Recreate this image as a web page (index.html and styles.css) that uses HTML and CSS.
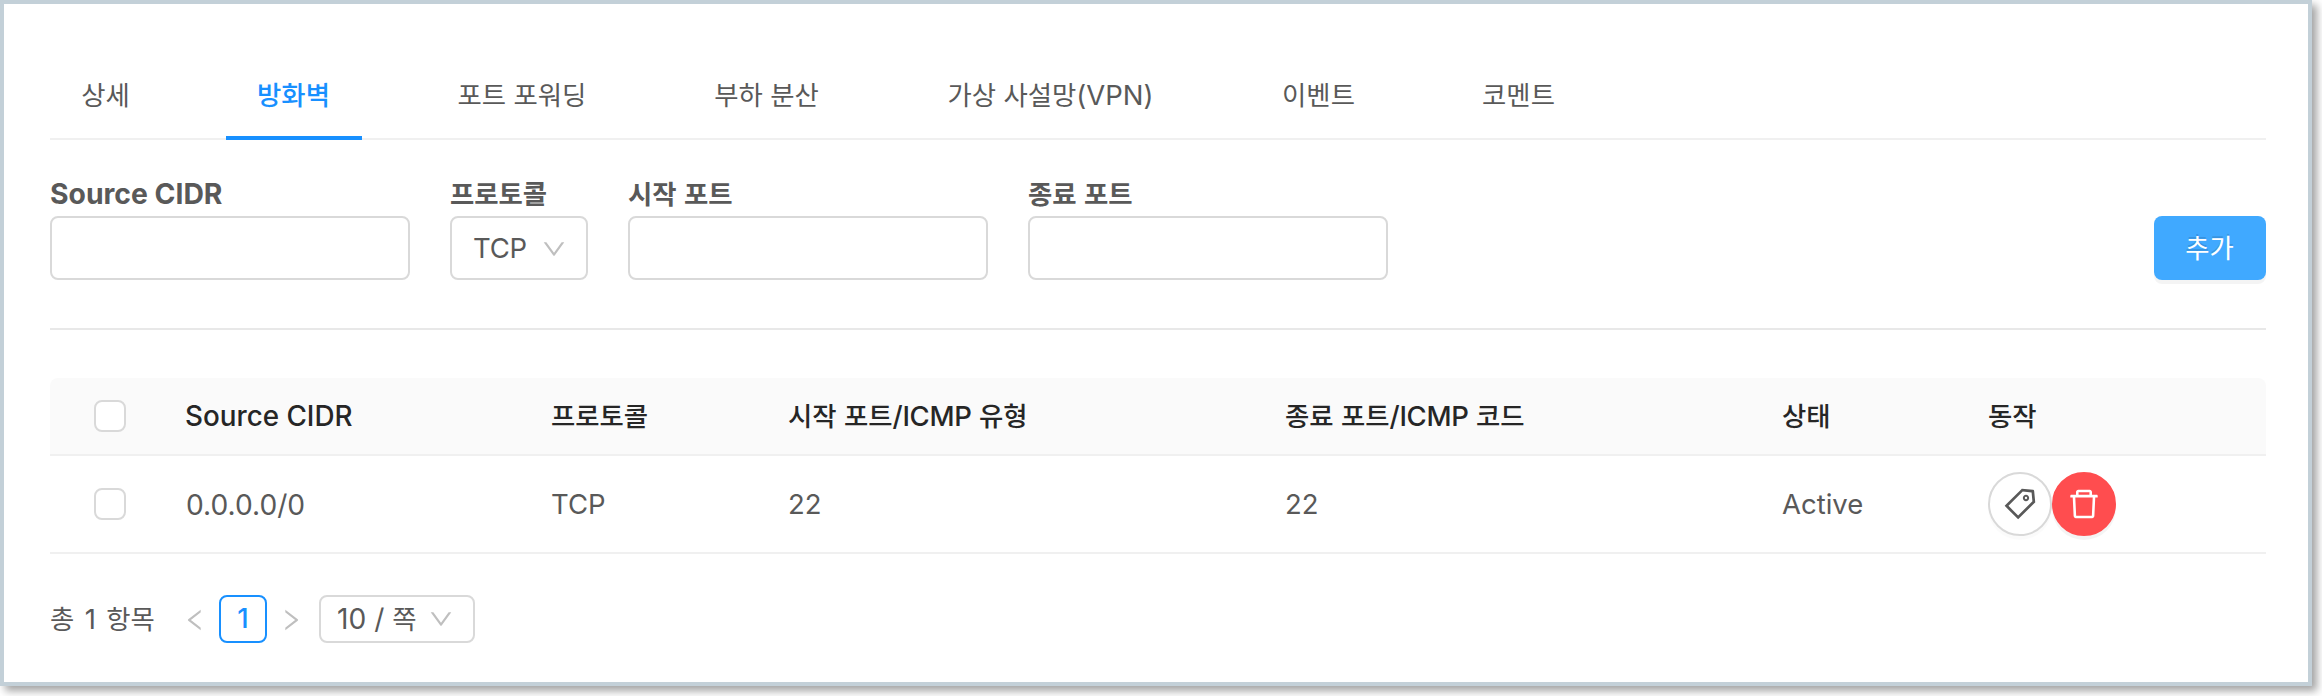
FILE: index.html
```html
<!DOCTYPE html>
<html lang="ko">
<head>
<meta charset="utf-8">
<title>방화벽</title>
<link rel="stylesheet" href="styles.css">
</head>
<body>
<svg class="defs" width="0" height="0">
  <symbol id="down" viewBox="64 64 896 896"><path d="M884 256h-75c-5.1 0-9.9 2.5-12.9 6.6L512 654.2 227.9 262.6c-3-4.1-7.8-6.6-12.9-6.6h-75c-6.5 0-10.3 7.4-6.5 12.7l352.6 486.1c12.8 17.6 39 17.6 51.7 0l352.6-486.1c3.9-5.3.1-12.7-6.4-12.7z"/></symbol>
  <symbol id="left" viewBox="64 64 896 896"><path d="M724 218.3V141c0-6.7-7.7-10.4-12.9-6.3L260.3 486.8a31.86 31.86 0 0 0 0 50.3l450.8 352.1c5.3 4.1 12.9.4 12.9-6.3v-77.3c0-4.9-2.3-9.6-6.1-12.6l-360-281 360-281.1c3.8-3 6.1-7.7 6.1-12.6z"/></symbol>
  <symbol id="tag" viewBox="64 64 896 896"><path d="M938 458.8l-29.6-312.6c-1.5-16.2-14.4-29-30.6-30.6L565.2 86h-.4c-3.2 0-5.7 1-7.6 2.9L88.9 557.2a9.96 9.96 0 0 0 0 14.1l363.8 363.8c1.9 1.9 4.4 2.9 7.1 2.9s5.2-1 7.1-2.9l468.3-468.3c2-2.1 3-5 2.8-8zM459.7 834.7L189.3 564.3 589 164.6 836 188l23.4 247-399.7 399.7zM680 256c-48.5 0-88 39.5-88 88s39.5 88 88 88 88-39.5 88-88-39.5-88-88-88zm0 120c-17.7 0-32-14.3-32-32s14.3-32 32-32 32 14.3 32 32-14.3 32-32 32z"/></symbol>
  <symbol id="delete" viewBox="64 64 896 896"><path d="M360 184h-8c4.4 0 8-3.6 8-8v8h304v-8c0 4.4 3.6 8 8 8h-8v72h72v-80c0-35.3-28.7-64-64-64H352c-35.3 0-64 28.7-64 64v80h72v-72zm504 72H160c-17.7 0-32 14.3-32 32v32c0 4.4 3.6 8 8 8h60.4l24.7 523c1.6 34.1 29.8 61 63.9 61h454c34.2 0 62.3-26.8 63.9-61l24.7-523H888c4.4 0 8-3.6 8-8v-32c0-17.7-14.3-32-32-32zM731.3 840H292.7l-24.2-512h487l-24.2 512z"/></symbol>
</svg>
<main class="panel">
  <nav class="tabs">
    <a class="tab w2">상세</a>
    <a class="tab w3 active">방화벽</a>
    <a class="tab w5">포트 포워딩</a>
    <a class="tab w4">부하 분산</a>
    <a class="tab wvpn">가상 사설망<span class="en">(VPN)</span></a>
    <a class="tab w3">이벤트</a>
    <a class="tab w3">코멘트</a>
  </nav>
  <form class="filters">
    <div class="field wide"><label class="en cidr">Source CIDR</label><input class="box"></div>
    <div class="field proto"><label>프로토콜</label><div class="box select"><span class="en">TCP</span><svg class="arrow"><use href="#down"/></svg></div></div>
    <div class="field wide"><label>시작 포트</label><input class="box"></div>
    <div class="field wide"><label>종료 포트</label><input class="box"></div>
    <button class="add" type="button">추가</button>
  </form>
  <section class="table">
    <div class="row head">
      <span><i class="check"></i></span>
      <span class="en">Source CIDR</span>
      <span>프로토콜</span>
      <span>시작 포트<span class="en">/ICMP</span> 유형</span>
      <span>종료 포트<span class="en">/ICMP</span> 코드</span>
      <span>상태</span>
      <span>동작</span>
    </div>
    <div class="row body en">
      <span><i class="check"></i></span>
      <span class="value address">0.0.0.0/0</span>
      <span class="value">TCP</span>
      <span class="value">22</span>
      <span class="value">22</span>
      <span class="value">Active</span>
      <span class="actions">
        <button class="round" type="button"><svg class="icon"><use href="#tag"/></svg></button>
        <button class="round danger" type="button"><svg class="icon"><use href="#delete"/></svg></button>
      </span>
    </div>
  </section>
  <footer class="pager">
    <span class="total">총 <span class="en">1</span> 항목</span>
    <svg class="arrow prev"><use href="#left"/></svg>
    <span class="page en">1</span>
    <svg class="arrow next"><use href="#left"/></svg>
    <div class="size"><span><span class="en">10 / </span>쪽</span><svg class="arrow"><use href="#down"/></svg></div>
  </footer>
</main>
</body>
</html>
```
FILE: styles.css
```css
* { box-sizing: border-box; }
body {
  margin: 0;
  height: 696px;
  overflow: hidden;
  background: #fff;
  color: #595959;
  font: 26.4px/44px "Noto Sans CJK KR", sans-serif;
}
.defs { display: block; width: 0; height: 0; }
.panel {
  width: 2312px;
  height: 686px;
  border: 4px solid #c3d0d8;
  padding: 50px 42px 0 46px;
  background: #fff;
  box-shadow: 5px 5px 8px rgba(0, 0, 0, .36);
}
.en { font-family: Inter, "Noto Sans CJK KR", sans-serif; font-size: 27.5px; line-height: 1; }

.tabs { display: flex; gap: 64px; height: 86px; border-bottom: 2px solid #f0f0f0; }
.tab { height: 86px; padding: 18px 1px 0 0; text-align: center; white-space: nowrap; }
.tab.active { color: #1890ff; font-weight: 500; border-bottom: 4px solid #1890ff; }
.w2 { width: 112px; }
.w3 { width: 136px; }
.w4 { width: 168px; }
.w5 { width: 193px; }
.wvpn { width: 272px; }

.filters {
  display: flex;
  align-items: flex-end;
  gap: 40px;
  height: 190px;
  padding-bottom: 48px;
  border-bottom: 2px solid #e8e8e8;
}
.field { display: flex; flex-direction: column; }
.field label { height: 45px; line-height: 44px; font-weight: 700; }
.field .cidr { font-size: 28.3px; line-height: 46px; }
.wide { width: 360px; }
.proto { width: 138px; }
.box { width: 100%; height: 64px; border: 2px solid #d9d9d9; border-radius: 8px; background: #fff; }
.select { display: flex; align-items: center; justify-content: space-between; padding: 2px 20px 0 21px; }
.select .en { letter-spacing: -.2px; }
.arrow { width: 24px; height: 24px; fill: #bfbfbf; flex: none; }
.add {
  width: 112px;
  height: 64px;
  padding: 0 1px 2px 0;
  margin-left: auto;
  border: 0;
  border-radius: 8px;
  background: #40a9ff;
  box-shadow: 0 4px 0 rgba(0, 0, 0, .045);
  color: #fff;
  font: inherit;
  text-shadow: 0 -2px 0 rgba(0, 0, 0, .12);
}

.table { margin-top: 48px; }
.row {
  display: grid;
  grid-template-columns: 135px 366px 237px 497px 497px 206px 1fr;
  align-items: center;
  border-bottom: 2px solid #f0f0f0;
}
.head { height: 78px; border-radius: 8px 8px 0 0; background: #fafafa; color: #262626; font-weight: 500; }
.head > span { padding-bottom: 2px; }
.head .en { letter-spacing: -.3px; }
.head > .en { padding: 2px 0 0; font-size: 27.8px; letter-spacing: 0; }
.head .check { margin-top: 2px; }
.body { height: 98px; }
.value { padding-top: 2px; }
.address { padding-left: 1px; font-size: 28.2px; }
.check {
  display: block;
  width: 32px;
  height: 32px;
  margin-left: 44px;
  border: 2px solid #d9d9d9;
  border-radius: 8px;
  background: #fff;
}
.actions { display: flex; }
.round {
  display: flex;
  align-items: center;
  justify-content: center;
  width: 64px;
  height: 64px;
  padding: 0;
  border: 2px solid #d9d9d9;
  border-radius: 50%;
  background: #fff;
  box-shadow: 0 4px 0 rgba(0, 0, 0, .016);
}
.danger { border-color: #ff4d4f; background: #ff4d4f; box-shadow: 0 4px 0 rgba(0, 0, 0, .045); }
.icon { width: 32px; height: 32px; fill: #595959; }
.danger .icon { fill: #fff; }

.pager { display: flex; align-items: center; height: 48px; margin-top: 41px; }
.total { width: 133px; padding-bottom: 2px; white-space: nowrap; word-spacing: 3px; }
.prev { margin: 2px 12px 0 0; }
.page {
  width: 48px;
  height: 48px;
  border: 2px solid #1890ff;
  border-radius: 8px;
  color: #1890ff;
  font-weight: 500;
  line-height: 43px;
  text-align: center;
}
.next { margin: 2px 16px 0 12px; transform: scaleX(-1); }
.size {
  display: flex;
  align-items: center;
  justify-content: space-between;
  width: 156px;
  height: 48px;
  padding: 0 20px 2px 16px;
  border: 2px solid #d9d9d9;
  border-radius: 8px;
  white-space: nowrap;
}
.size .en { font-size: 28.2px; }
.size .arrow { margin-top: 2px; }
```
